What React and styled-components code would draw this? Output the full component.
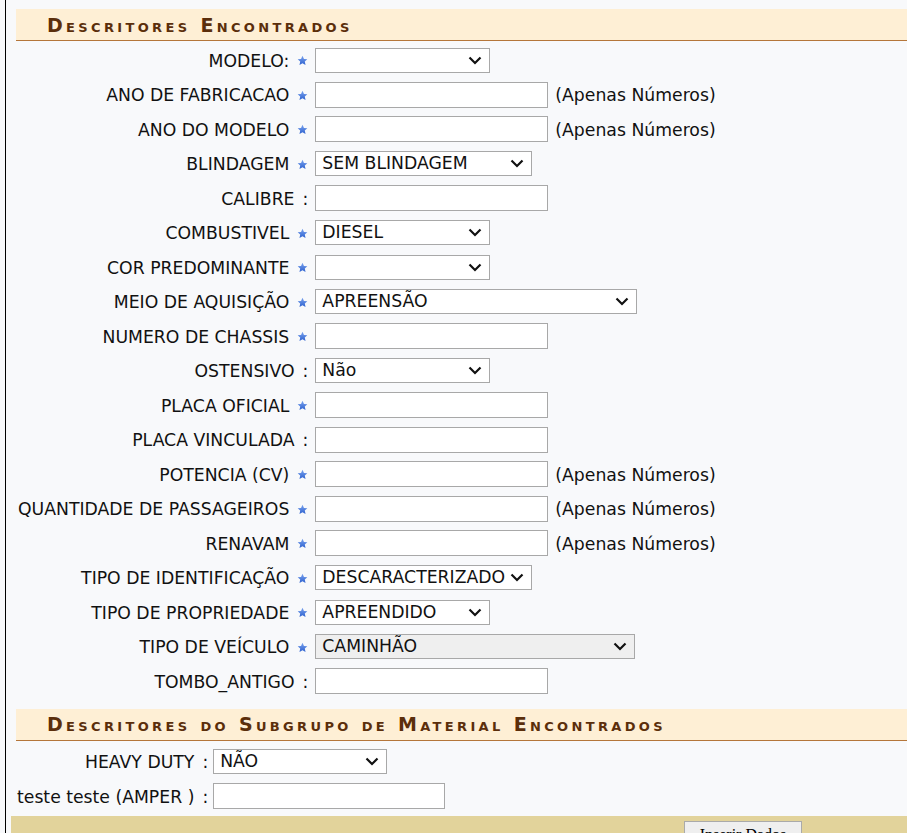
import React from "react";
import styled, { createGlobalStyle } from "styled-components";

const Global = createGlobalStyle`
  html, body { margin: 0; padding: 0; background: #f8f9fb; overflow: hidden; }
  body { font-family: "DejaVu Sans", Verdana, sans-serif; }
`;

const Page = styled.div`
  margin-left: 5px;
  border-left: 1px solid #000;
  min-height: 833px;
  padding: 9px 0 0 5px;
  background: #f8f9fb;
  box-sizing: border-box;
`;

const Section = styled.section`
  margin-left: 5px;
  margin-top: ${(p) => p.$mt || 0}px;
`;

const SectionTitle = styled.h3`
  margin: 0;
  height: 32px;
  box-sizing: border-box;
  padding-left: 31px;
  display: flex;
  align-items: center;
  background: #feefd5;
  border-bottom: 1px solid #b5763a;
  color: #5b2e0b;
  font-family: "DejaVu Sans", Verdana, sans-serif;
  font-size: 19px;
  font-weight: bold;
  font-variant: small-caps;
  letter-spacing: 3.35px;
  white-space: nowrap;
`;

const FormGrid = styled.div`
  display: grid;
  grid-template-columns: max-content max-content;
  grid-auto-rows: 34.5px;
  column-gap: ${(p) => p.$gap || 6}px;
  align-items: center;
  padding: ${(p) => p.$pt || 2}px 0 0 ${(p) => p.$pl || 2}px;
`;

const Label = styled.div`
  font-size: 17.25px;
  color: #111;
  white-space: nowrap;
  display: flex;
  align-items: center;
  justify-content: flex-end;
  gap: 8px;
  padding-top: 1px;
`;

const FieldCell = styled.div`
  display: flex;
  align-items: center;
  gap: 7px;
`;

const TextInput = styled.input`
  width: ${(p) => p.$w || 233}px;
  height: 26px;
  box-sizing: border-box;
  border: 1px solid #a8a8a8;
  background: #fff;
  margin: 0;
  padding: 0 4px;
  font-family: "DejaVu Sans", Verdana, sans-serif;
  font-size: 16px;
`;

const SelectWrap = styled.span`
  position: relative;
  display: inline-flex;
  width: ${(p) => p.$w || 175}px;
  height: 25px;
`;

const Select = styled.select`
  appearance: none;
  -webkit-appearance: none;
  width: 100%;
  height: 100%;
  box-sizing: border-box;
  border: 1px solid #a8a8a8;
  border-radius: 0;
  background-color: ${(p) => (p.$grey ? "#efefef" : "#fff")};
  color: #111;
  margin: 0;
  padding: 0 4px 0 6px;
  font-family: "DejaVu Sans", Verdana, sans-serif;
  font-size: 17.25px;
  line-height: 23px;
`;

const Chevron = styled.svg`
  position: absolute;
  right: 8px;
  top: 8px;
  pointer-events: none;
`;

const Hint = styled.span`
  font-size: 17.25px;
  color: #111;
  white-space: nowrap;
  padding-top: 1px;
`;

const Footer = styled.div`
  margin-top: 2px;
  height: 40px;
  background: #e2d39b;
  padding: 5px 0 0 673px;
  box-sizing: border-box;
`;

const Button = styled.button`
  width: 118px;
  height: 28px;
  background: #efefef;
  border: 1px solid #aaa;
  font-family: "Liberation Serif", "Times New Roman", serif;
  font-size: 16px;
  padding: 0;
  margin: 0;
`;

const Star = () => (
  <svg width="11" height="11" viewBox="0 0 24 24" aria-hidden="true">
    <defs>
      <linearGradient id="sg" x1="0" y1="0" x2="0" y2="1">
        <stop offset="0" stopColor="#7aa3ee" />
        <stop offset="1" stopColor="#2f62cf" />
      </linearGradient>
    </defs>
    <path
      d="M12 1.5l3.2 7 7.3.7-5.5 5 1.6 7.5L12 17.8l-6.6 3.9L7 14.2l-5.5-5 7.3-.7z"
      fill="url(#sg)"
    />
  </svg>
);

const fields = [
  { label: "MODELO:", req: true, type: "select", w: 175, value: "" },
  { label: "ANO DE FABRICACAO", req: true, type: "input", hint: true },
  { label: "ANO DO MODELO", req: true, type: "input", hint: true },
  { label: "BLINDAGEM", req: true, type: "select", w: 217, value: "SEM BLINDAGEM" },
  { label: "CALIBRE", type: "input" },
  { label: "COMBUSTIVEL", req: true, type: "select", w: 175, value: "DIESEL" },
  { label: "COR PREDOMINANTE", req: true, type: "select", w: 175, value: "" },
  { label: "MEIO DE AQUISIÇÃO", req: true, type: "select", w: 322, value: "APREENSÃO" },
  { label: "NUMERO DE CHASSIS", req: true, type: "input" },
  { label: "OSTENSIVO", type: "select", w: 175, value: "Não" },
  { label: "PLACA OFICIAL", req: true, type: "input" },
  { label: "PLACA VINCULADA", type: "input" },
  { label: "POTENCIA (CV)", req: true, type: "input", hint: true },
  { label: "QUANTIDADE DE PASSAGEIROS", req: true, type: "input", hint: true },
  { label: "RENAVAM", req: true, type: "input", hint: true },
  { label: "TIPO DE IDENTIFICAÇÃO", req: true, type: "select", w: 217, value: "DESCARACTERIZADO" },
  { label: "TIPO DE PROPRIEDADE", req: true, type: "select", w: 175, value: "APREENDIDO" },
  { label: "TIPO DE VEÍCULO", req: true, type: "select", w: 320, value: "CAMINHÃO", grey: true },
  { label: "TOMBO_ANTIGO", type: "input" },
];

const sub = [
  { label: "HEAVY DUTY", type: "select", w: 174, value: "NÃO" },
  { label: "teste teste (AMPER )", type: "input", w: 232 },
];

function Field({ f }) {
  return (
    <>
      <Label>
        <span>{f.label}</span>
        {f.req ? <Star /> : <span>:</span>}
      </Label>
      <FieldCell>
        {f.type === "select" ? (
          <SelectWrap $w={f.w}>
            <Select $grey={f.grey} defaultValue={f.value}>
              <option value={f.value}>{f.value}</option>
            </Select>
            <Chevron width="14" height="9" viewBox="0 0 14 9" aria-hidden="true">
              <path d="M1.5 1.5l5.5 5.5 5.5-5.5" fill="none" stroke="#111" strokeWidth="2.2" />
            </Chevron>
          </SelectWrap>
        ) : (
          <TextInput type="text" $w={f.w} />
        )}
        {f.hint && <Hint>(Apenas Números)</Hint>}
      </FieldCell>
    </>
  );
}

export default function App() {
  return (
    <>
      <Global />
      <Page>
        <Section>
          <SectionTitle>Descritores Encontrados</SectionTitle>
          <FormGrid $pl={2} $gap={7}>
            {fields.map((f) => (
              <Field key={f.label} f={f} />
            ))}
          </FormGrid>
        </Section>
        <Section $mt={10}>
          <SectionTitle>Descritores do Subgrupo de Material Encontrados</SectionTitle>
          <FormGrid $pl={1} $pt={4} $gap={5}>
            {sub.map((f) => (
              <Field key={f.label} f={f} />
            ))}
          </FormGrid>
        </Section>
        <Footer>
          <Button type="button">Inserir Dados</Button>
        </Footer>
      </Page>
    </>
  );
}
